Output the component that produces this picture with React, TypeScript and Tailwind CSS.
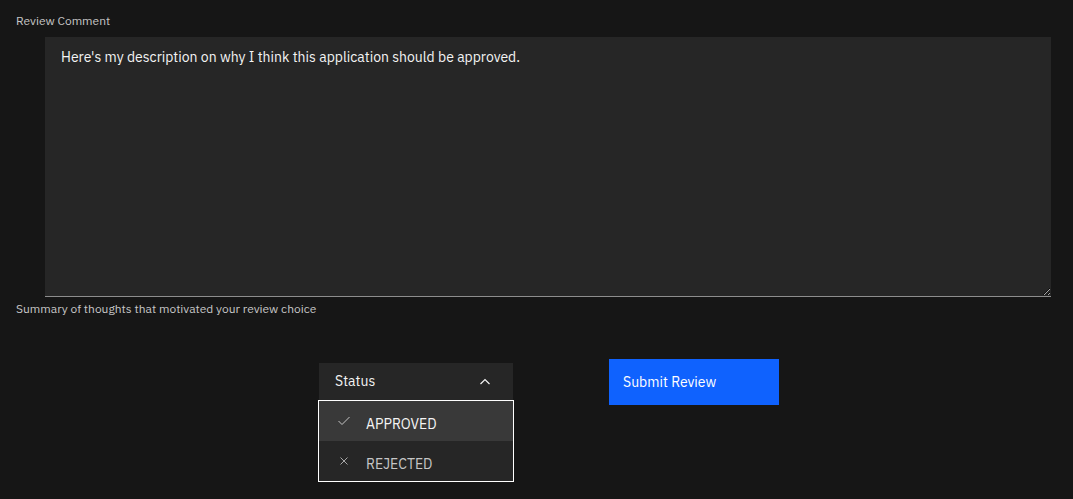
import React from "react";

const font = { fontFamily: '"IBM Plex Sans", "Noto Sans", "Open Sans", sans-serif' };

function Check() {
  return (
    <svg width="16" height="16" viewBox="0 0 16 16" fill="none" stroke="#c6c6c6" strokeWidth="1">
      <path d="M2.5 8 L6 11.5 L13.5 4" />
    </svg>
  );
}

function Cross() {
  return (
    <svg width="16" height="16" viewBox="0 0 16 16" fill="none" stroke="#a8a8a8" strokeWidth="1">
      <path d="M4.5 4.5 L11.5 11.5 M11.5 4.5 L4.5 11.5" />
    </svg>
  );
}

function ChevronUp() {
  return (
    <svg width="16" height="16" viewBox="0 0 16 16" fill="none" stroke="#f4f4f4" strokeWidth="1.2">
      <path d="M3.5 10 L8 5.5 L12.5 10" />
    </svg>
  );
}

export default function App() {
  return (
    <div className="min-h-[499px] w-full bg-[#161616] px-4 pt-[13px]" style={font}>
      <div className="text-[12px] leading-4 text-[#c6c6c6] mb-[8px]">Review Comment</div>
      <textarea
        className="block ml-[29px] mr-[6px] w-[1006px] h-[260px] bg-[#262626] border-0 border-b border-[#8d8d8d] px-4 pt-[11px] text-[14px] leading-[18px] text-[#f4f4f4] outline-none resize-y"
        style={font}
        defaultValue="Here's my description on why I think this application should be approved."
      />
      <div className="mt-[4px] text-[12px] leading-4 text-[#c6c6c6]">
        Summary of thoughts that motivated your review choice
      </div>
      <div className="mt-[42px] flex items-start">
        <div className="relative ml-[303px] mt-[4px] w-[194px]">
          <div className="flex h-[37px] items-center justify-between bg-[#262626] pl-4 pr-[20px] text-[14px] text-[#f4f4f4]">
            <span>Status</span>
            <ChevronUp />
          </div>
          <div className="absolute left-[-1px] top-[37px] w-[196px] border border-white bg-[#262626]">
            <div className="flex h-[40px] items-start bg-[#393939] text-[14px] leading-[18px] text-[#f4f4f4]">
              <span className="ml-[17px] mr-[14px] mt-[12px]">
                <Check />
              </span>
              <span className="mt-[14px]">APPROVED</span>
            </div>
            <div className="flex h-[40px] items-start text-[14px] leading-[18px] text-[#c6c6c6]">
              <span className="ml-[17px] mr-[14px] mt-[12px]">
                <Cross />
              </span>
              <span className="mt-[14px]">REJECTED</span>
            </div>
          </div>
        </div>
        <button
          className="ml-[96px] flex h-[46px] w-[170px] items-center bg-[#0f62fe] pl-[14px] text-[14px] text-white"
          style={font}
        >
          Submit Review
        </button>
      </div>
    </div>
  );
}
